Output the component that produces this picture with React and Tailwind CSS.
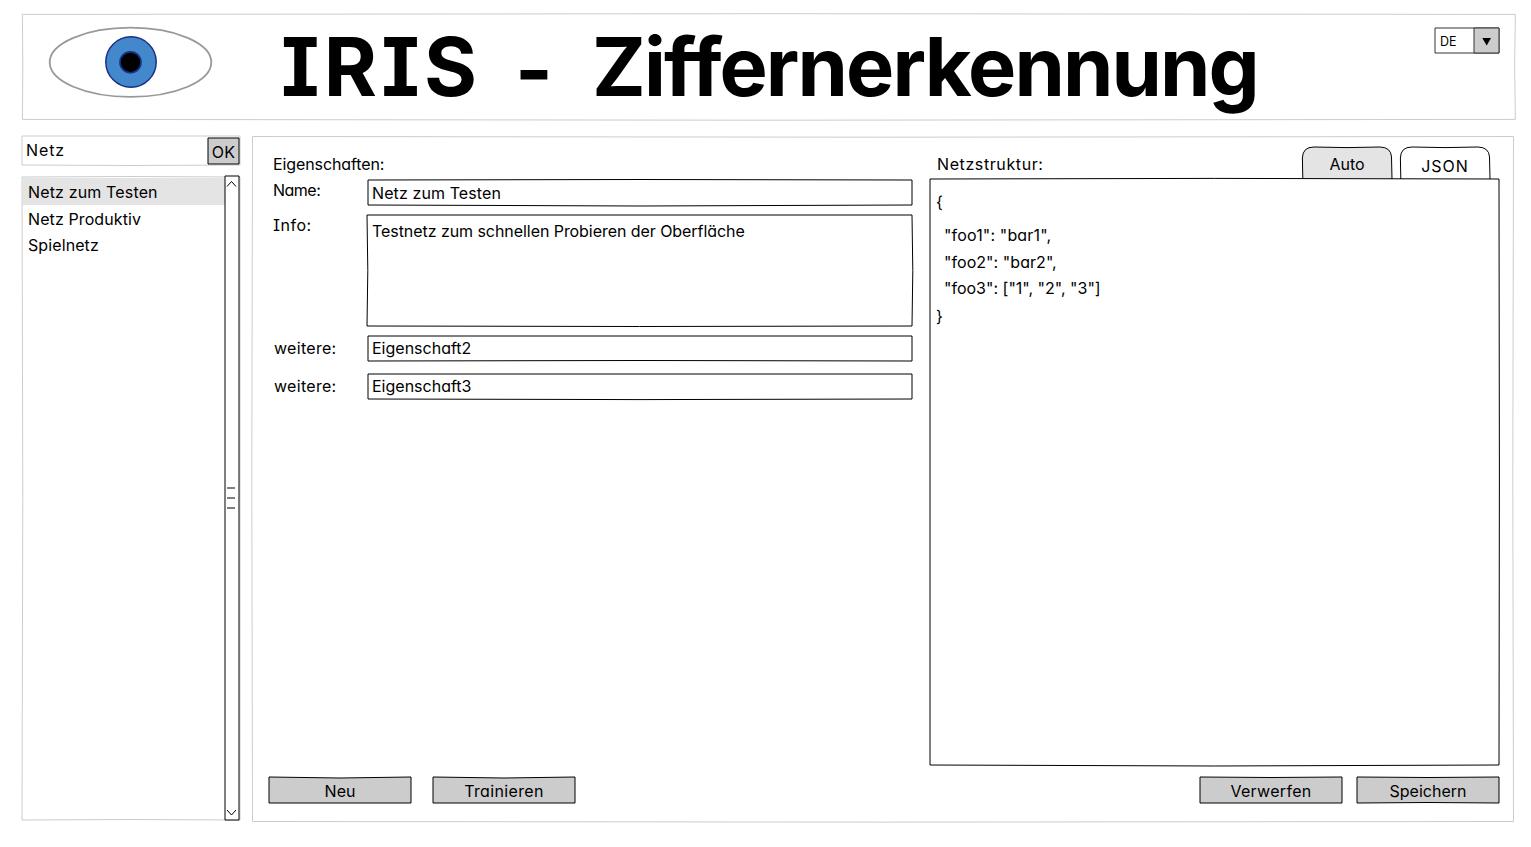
const FONT =
  "font-['Comic_Sans_MS','Inter',sans-serif] [font-feature-settings:'cv11','cv08'] text-[16px] leading-[20px] text-black";

// Hand-drawn rectangle outline; t/r/b/l bow the matching edge in pixels.
function Sketch({ w, h, stroke = "#000", fill = "none", t = 0, r = 0, b = 0, l = 0, o = 0 }) {
  const d = `M0 0Q${w / 2} ${t * 2} ${w} 0Q${w + r * 2} ${h / 2} ${w} ${h}Q${w / 2} ${h + b * 2} 0 ${h}Q${l * 2} ${h / 2} 0 0Z`;
  return (
    <svg className="absolute left-0 top-0 overflow-visible pointer-events-none" width={w} height={h} aria-hidden="true">
      <path d={d} transform={`translate(${o} ${o})`} fill={fill} stroke={stroke} strokeWidth="1" />
    </svg>
  );
}

function Button({ children, spacing = "", ...sketch }) {
  return (
    <button className="relative flex h-[26px] w-[142px] items-center justify-center pt-[2px]">
      <Sketch w={142} h={26} fill="#ccc" {...sketch} />
      <span className={`relative ${spacing}`}>{children}</span>
    </button>
  );
}

function Field({ label, value, labelClass, labelSpacing, valueClass, ...sketch }) {
  return (
    <div className="flex h-[25px]">
      <span className={`w-[96px] whitespace-nowrap ${labelClass} ${labelSpacing}`}>{label}</span>
      <div className="relative h-[25px] w-[544px] pl-[4px]">
        <Sketch w={544} h={25} {...sketch} />
        <div className={`relative ${valueClass}`}>{value}</div>
      </div>
    </div>
  );
}

function Tab({ children, active, className }) {
  return (
    <div className="relative flex h-[32px] w-[90px] justify-center">
      <svg className="absolute left-0 top-0 overflow-visible" width="90" height="32" aria-hidden="true">
        <path
          d="M.8 32L.4 11Q.6 0 12 0Q45 1.2 78 0Q89 .3 89.5 10L90 32"
          fill={active ? "#fff" : "#e4e4e4"}
          stroke="#000"
        />
      </svg>
      <span className={`relative ${className}`}>{children}</span>
    </div>
  );
}

function Header() {
  return (
    <header className="relative flex h-[105px] w-[1494px]">
      <Sketch w={1493} h={105} stroke="#ccc" t={-0.7} b={0.8} r={-0.8} l={0.4} o={0.4} />
      <svg className="ml-[26px] mt-[12px] shrink-0" width="166" height="73" viewBox="48 26 166 73" aria-label="IRIS">
        <ellipse cx="130.5" cy="62.3" rx="80.8" ry="34.6" fill="#fff" stroke="#999" strokeWidth="1.8" />
        <circle cx="131" cy="62" r="25.2" fill="#4488cc" stroke="#1b2f85" strokeWidth="1.5" />
        <circle cx="130.5" cy="62.3" r="10.5" fill="#000" stroke="#1b2f85" strokeWidth="1.7" />
      </svg>
      <h1 className="flex h-[105px] whitespace-nowrap pl-[67px] pt-[13px] text-[81px] font-bold leading-[80px]">
        <span className="w-[234px] tracking-[4.2px]">IRIS</span>
        <span className="w-[77px] pt-[3px]">-</span>
        <span className="tracking-[-1.9px]">Ziffernerkennung</span>
      </h1>
      <div className="relative ml-auto mr-[17px] mt-[14px] flex h-[25px] w-[64px] text-[12.5px]">
        <Sketch w={64} h={25} stroke="#333" />
        <span className="relative w-[39px] pl-[5px] pt-[4px]">DE</span>
        <svg className="relative overflow-visible" width="25" height="25" aria-hidden="true">
          <path d="M0 0H25V25H0Z" fill="#ccc" stroke="#333" />
          <path d="M8.3 10H17L12.7 17.5Z" fill="#000" />
        </svg>
      </div>
    </header>
  );
}

function Sidebar() {
  return (
    <aside className="w-[218px]">
      <div className="relative flex h-[29px] justify-between">
        <Sketch w={218} h={29} stroke="#ccc" b={0.5} />
        <span className="relative pl-[4px] pt-[4px] tracking-[0.9px]">Netz</span>
        <button className="relative mr-[1px] mt-[2px] flex h-[26px] w-[31px] justify-center pt-[4px]">
          <Sketch w={31} h={26} fill="#ccc" />
          <span className="relative tracking-[0.3px]">OK</span>
        </button>
      </div>
      <div className="relative mt-[12px] flex h-[643px]">
        <Sketch w={218} h={643} stroke="#ccc" t={-0.5} l={0.8} b={-0.5} />
        <ul className="relative w-[203px] pt-px">
          <li className="ml-px h-[27px] bg-[#e4e4e4] pl-[5px] pt-[4px] tracking-[0.15px]">Netz zum Testen</li>
          <li className="h-[26px] pl-[6px] pt-[4px] tracking-[0.1px]">Netz Produktiv</li>
          <li className="h-[26px] pl-[6px] pt-[4px] tracking-[0.1px]">Spielnetz</li>
        </ul>
        <div className="relative mt-[-1px] h-[644px] w-[14px]">
          <Sketch w={14} h={644} fill="#fff" />
          <svg className="relative block" width="14" height="644" fill="none" stroke="#000" aria-hidden="true">
            <path d="M2 10.5L6.5 5.5L11 10.5M2 634L6.5 639L11 634" />
            <path d="M2 312H10M2 322H10M2 332H10" />
          </svg>
        </div>
      </div>
    </aside>
  );
}

function Editor() {
  return (
    <main className="relative flex h-[686px] w-[1262px] flex-col">
      <Sketch w={1261} h={685} stroke="#ccc" t={0.7} r={-0.7} b={0.6} l={-0.7} o={0.5} />
      <div className="relative flex h-[641px] pl-[20px]">
        <section className="w-[640px] pt-[18px]">
          <h2 className="h-[26px] pl-px tracking-[-0.1px]">Eigenschaften:</h2>
          <Field label="Name:" value="Netz zum Testen" labelClass="pl-px" labelSpacing="tracking-[-0.5px]" valueClass="pt-[3px] tracking-[0.1px]" t={-0.5} b={1} />
          <div className="mt-[10px] flex h-[111px]">
            <span className="w-[95px] pl-px tracking-[0.5px]">Info:</span>
            <div className="relative w-[545px] pl-[5px] pt-[6px] tracking-[-0.06px]">
              <Sketch w={545} h={111} r={0.8} l={0.8} b={0.5} />
              <span className="relative">Testnetz zum schnellen Probieren der Oberfläche</span>
            </div>
          </div>
          <div className="mt-[10px] flex flex-col gap-[13px]">
            <Field label="weitere:" value="Eigenschaft2" labelClass="pl-[2px] pt-[2px]" labelSpacing="tracking-[0.3px]" valueClass="pt-[2px]" b={-0.5} />
            <Field label="weitere:" value="Eigenschaft3" labelClass="pl-[2px] pt-[2px]" labelSpacing="tracking-[0.3px]" valueClass="pt-[2px]" b={0.6} />
          </div>
        </section>
        <section className="ml-[18px] w-[569px] pt-[11px]">
          <div className="flex h-[32px] justify-between">
            <h2 className="pl-[7px] pt-[7px] tracking-[0.6px]">Netzstruktur:</h2>
            <div className="mr-[9px] flex gap-[8px]">
              <Tab className="pt-[7px]">Auto</Tab>
              <Tab active className="pt-[9px] tracking-[1px]">JSON</Tab>
            </div>
          </div>
          <div className="relative h-[587px] whitespace-pre pl-[6px] pt-[13px]">
            <Sketch w={569} h={586} t={-0.6} b={1} r={0.4} />
            <div className="relative h-[33px]">{"{"}</div>
            <div className="relative h-[27px] pl-[8px] tracking-[0.15px]">"foo1": "bar1",</div>
            <div className="relative h-[26px] pl-[8px] tracking-[0.05px]">"foo2": "bar2",</div>
            <div className="relative h-[28px] pl-[8px]">"foo3": ["1", "2", "3"]</div>
            <div className="relative">{"}"}</div>
          </div>
        </section>
      </div>
      <div className="relative flex justify-between pl-[17px] pr-[15px]">
        <div className="flex gap-[22px]">
          <Button t={1}>Neu</Button>
          <Button t={1} spacing="tracking-[0.35px]">Trainieren</Button>
        </div>
        <div className="flex gap-[15px]">
          <Button t={0.5} spacing="tracking-[0.3px]">Verwerfen</Button>
          <Button t={0.5} b={-0.5}>Speichern</Button>
        </div>
      </div>
    </main>
  );
}

export default function App() {
  return (
    <div className={`h-[847px] w-[1531px] overflow-hidden bg-white pl-[22px] pt-[14px] ${FONT}`}>
      <Header />
      <div className="mt-[17px] flex gap-[12px]">
        <Sidebar />
        <Editor />
      </div>
    </div>
  );
}
